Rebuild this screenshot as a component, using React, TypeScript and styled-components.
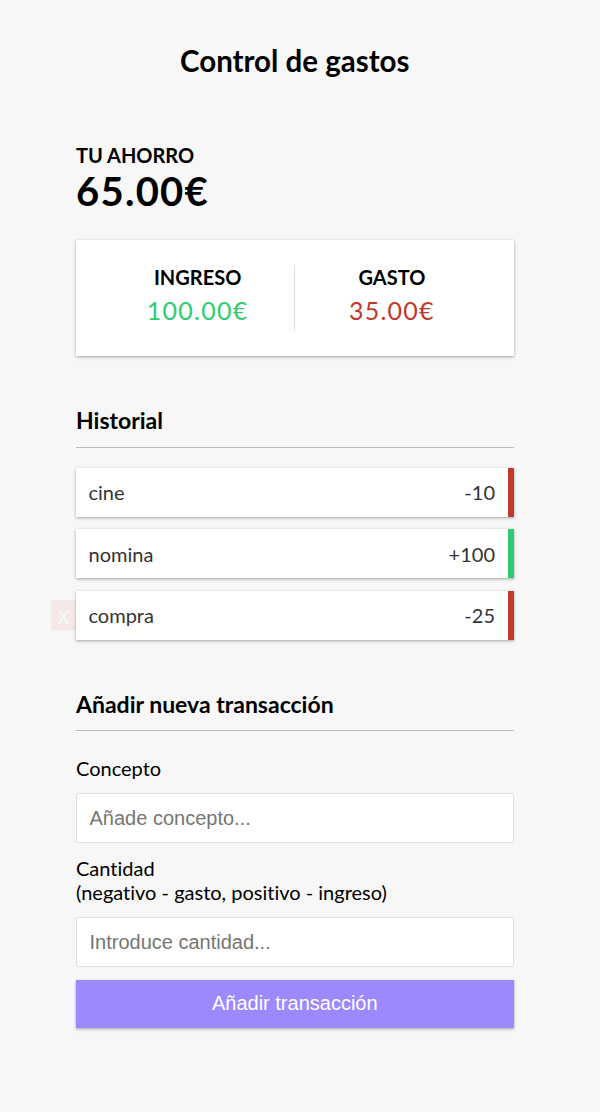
import styled, { createGlobalStyle } from 'styled-components';

const GlobalStyle = createGlobalStyle`
  * {
    box-sizing: border-box;
  }

  body {
    margin: 0;
    background-color: #f7f7f7;
    font-family: Lato, 'Noto Sans', sans-serif;
    font-variant-ligatures: none;
  }
`;

const shadow = '0 1.25px 3.75px rgba(0, 0, 0, 0.12), 0 1.25px 2.5px rgba(0, 0, 0, 0.24)';
const plusColor = '#2ecc71';
const minusColor = '#c0392b';

interface ITransaction {
  id: number;
  text: string;
  amount: number;
}

const transactions: ITransaction[] = [
  { id: 1, text: 'cine', amount: -10 },
  { id: 2, text: 'nomina', amount: 100 },
  { id: 3, text: 'compra', amount: -25 },
];

const Container = styled.div`
  width: 437.5px;
  margin-left: 76px;
  padding: 43px 0 40px;
`;

const Title = styled.h2`
  margin: 0 0 63.5px;
  font-size: 29.5px;
  line-height: 36px;
  font-weight: 700;
  text-align: center;
`;

const Label4 = styled.h4`
  margin: 0;
  font-size: 20px;
  line-height: 24px;
  font-weight: 700;
  text-transform: uppercase;
`;

const Balance = styled.h1`
  margin: 0;
  font-size: 40px;
  line-height: 48px;
  font-weight: 700;
  letter-spacing: 1.25px;
`;

const IncExp = styled.div`
  display: flex;
  justify-content: space-between;
  margin: 25px 0;
  padding: 25px;
  background-color: #fff;
  box-shadow: ${shadow};
`;

const IncExpCol = styled.div<{ $divider?: boolean }>`
  flex: 1;
  text-align: center;
  border-right: ${({ $divider }) => ($divider ? '1px solid #dedede' : 'none')};
`;

const Money = styled.p<{ $plus?: boolean }>`
  margin: 6.25px 0;
  font-size: 25px;
  line-height: 30px;
  letter-spacing: 1.25px;
  color: ${({ $plus }) => ($plus ? plusColor : minusColor)};
`;

const SectionTitle = styled.h3`
  margin: 50px 0 12.5px;
  padding-bottom: 12.5px;
  border-bottom: 1px solid #bbb;
  font-size: 23px;
  line-height: 28px;
  font-weight: 700;
`;

const List = styled.ul`
  list-style: none;
  padding: 0;
  margin: 20px 0 50px;
`;

const Item = styled.li<{ $plus?: boolean }>`
  position: relative;
  display: flex;
  justify-content: space-between;
  margin: 12.5px 0;
  padding: 12.5px;
  font-size: 20px;
  line-height: 24px;
  color: #333;
  background-color: #fff;
  box-shadow: ${shadow};
  border-right: 6.25px solid ${({ $plus }) => ($plus ? plusColor : minusColor)};
`;

const DeleteButton = styled.button<{ $visible?: boolean }>`
  position: absolute;
  top: 50%;
  left: 0;
  transform: translate(-100%, -50%);
  padding: 2.5px 6.25px;
  border: 0;
  background-color: #e74c3c;
  color: #fff;
  font-family: 'Liberation Sans', Arial, sans-serif;
  font-size: 25px;
  line-height: 25px;
  opacity: ${({ $visible }) => ($visible ? 0.08 : 0)};
`;

const FormControl = styled.div``;

const Label = styled.label`
  display: inline-block;
  margin: 12.5px 0;
  font-size: 20px;
  line-height: 24.5px;
`;

const Input = styled.input`
  display: block;
  width: 100%;
  padding: 12.5px;
  border: 1px solid #dedede;
  border-radius: 2.5px;
  background: #fff;
  font-family: 'Liberation Sans', Arial, sans-serif;
  font-size: 20px;

  &::placeholder {
    color: #757575;
  }
`;

const SubmitButton = styled.button`
  display: block;
  width: 100%;
  margin: 12.5px 0 0;
  padding: 12.5px;
  border: 0;
  background-color: #9c88ff;
  box-shadow: ${shadow};
  color: #fff;
  font-family: 'Liberation Sans', Arial, sans-serif;
  font-size: 20px;
  cursor: pointer;
`;

export default function App() {
  const income = transactions.filter((t) => t.amount > 0).reduce((a, t) => a + t.amount, 0);
  const expense = transactions.filter((t) => t.amount < 0).reduce((a, t) => a - t.amount, 0);

  return (
    <>
      <GlobalStyle />
      <Container>
        <Title>Control de gastos</Title>

        <Label4>Tu ahorro</Label4>
        <Balance>{(income - expense).toFixed(2)}€</Balance>

        <IncExp>
          <IncExpCol $divider>
            <Label4>Ingreso</Label4>
            <Money $plus>{income.toFixed(2)}€</Money>
          </IncExpCol>
          <IncExpCol>
            <Label4>Gasto</Label4>
            <Money>{expense.toFixed(2)}€</Money>
          </IncExpCol>
        </IncExp>

        <SectionTitle>Historial</SectionTitle>
        <List>
          {transactions.map((t, i) => (
            <Item key={t.id} $plus={t.amount > 0}>
              {t.text}
              <span>
                {t.amount > 0 ? '+' : ''}
                {t.amount}
              </span>
              <DeleteButton $visible={i === transactions.length - 1}>x</DeleteButton>
            </Item>
          ))}
        </List>

        <SectionTitle>Añadir nueva transacción</SectionTitle>
        <form onSubmit={(e) => e.preventDefault()}>
          <FormControl>
            <Label htmlFor="text">Concepto</Label>
            <Input type="text" id="text" placeholder="Añade concepto..." />
          </FormControl>
          <FormControl>
            <Label htmlFor="amount">
              Cantidad <br />
              (negativo - gasto, positivo - ingreso)
            </Label>
            <Input type="number" id="amount" placeholder="Introduce cantidad..." />
          </FormControl>
          <SubmitButton>Añadir transacción</SubmitButton>
        </form>
      </Container>
    </>
  );
}
